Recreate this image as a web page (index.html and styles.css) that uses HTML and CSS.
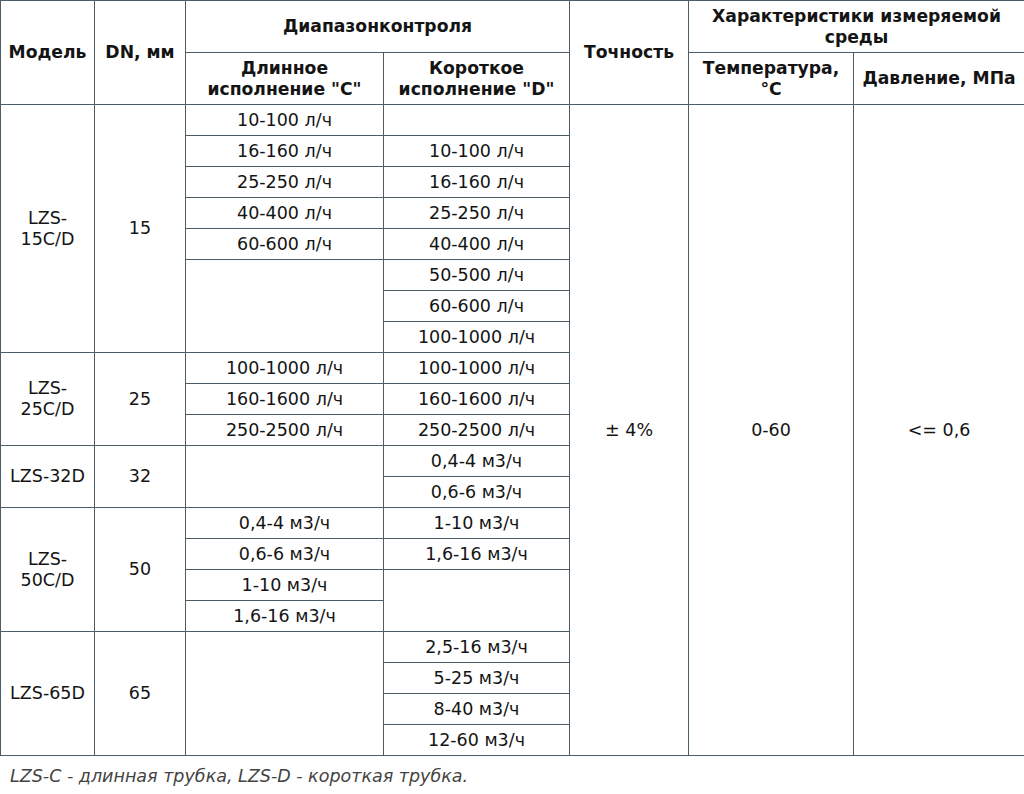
FILE: index.html
```html
<!DOCTYPE html>
<html lang="ru">
<head>
<meta charset="utf-8">
<title>LZS</title>
<link rel="stylesheet" href="styles.css">
</head>
<body>
<table class="spec">
  <colgroup>
    <col class="c-model"><col class="c-dn"><col class="c-long"><col class="c-short"><col class="c-acc"><col class="c-temp"><col class="c-press">
  </colgroup>
  <thead>
    <tr>
      <th rowspan="2">Модель</th>
      <th rowspan="2">DN, мм</th>
      <th colspan="2">Диапазонконтроля</th>
      <th rowspan="2">Точность</th>
      <th colspan="2">Характеристики измеряемой среды</th>
    </tr>
    <tr>
      <th>Длинное исполнение "C"</th>
      <th>Короткое исполнение "D"</th>
      <th>Температура, °C</th>
      <th>Давление, МПа</th>
    </tr>
  </thead>
  <tbody>
    <tr><td rowspan="8">LZS-<br>15C/D</td><td rowspan="8">15</td><td>10-100 л/ч</td><td></td><td rowspan="21">± 4%</td><td rowspan="21">0-60</td><td rowspan="21">&lt;= 0,6</td></tr>
    <tr><td>16-160 л/ч</td><td>10-100 л/ч</td></tr>
    <tr><td>25-250 л/ч</td><td>16-160 л/ч</td></tr>
    <tr><td>40-400 л/ч</td><td>25-250 л/ч</td></tr>
    <tr><td>60-600 л/ч</td><td>40-400 л/ч</td></tr>
    <tr><td rowspan="3"></td><td>50-500 л/ч</td></tr>
    <tr><td>60-600 л/ч</td></tr>
    <tr><td>100-1000 л/ч</td></tr>
    <tr><td rowspan="3">LZS-<br>25C/D</td><td rowspan="3">25</td><td>100-1000 л/ч</td><td>100-1000 л/ч</td></tr>
    <tr><td>160-1600 л/ч</td><td>160-1600 л/ч</td></tr>
    <tr><td>250-2500 л/ч</td><td>250-2500 л/ч</td></tr>
    <tr><td rowspan="2">LZS-32D</td><td rowspan="2">32</td><td rowspan="2"></td><td>0,4-4 м3/ч</td></tr>
    <tr><td>0,6-6 м3/ч</td></tr>
    <tr><td rowspan="4">LZS-<br>50C/D</td><td rowspan="4">50</td><td>0,4-4 м3/ч</td><td>1-10 м3/ч</td></tr>
    <tr><td>0,6-6 м3/ч</td><td>1,6-16 м3/ч</td></tr>
    <tr><td>1-10 м3/ч</td><td rowspan="2"></td></tr>
    <tr><td>1,6-16 м3/ч</td></tr>
    <tr><td rowspan="4">LZS-65D</td><td rowspan="4">65</td><td rowspan="4"></td><td>2,5-16 м3/ч</td></tr>
    <tr><td>5-25 м3/ч</td></tr>
    <tr><td>8-40 м3/ч</td></tr>
    <tr><td>12-60 м3/ч</td></tr>
  </tbody>
</table>
<p class="note">LZS-C - длинная трубка, LZS-D - короткая трубка.</p>
</body>
</html>
```

FILE: styles.css
```css
html, body {
  margin: 0;
  padding: 0;
  background: #ffffff;
}
body {
  font-family: "DejaVu Sans", Verdana, sans-serif;
  font-size: 17.5px;
  color: #141414;
}
.spec {
  width: 1024px;
  border-collapse: collapse;
  table-layout: fixed;
}
.c-model { width: 94px; }
.c-dn { width: 91px; }
.c-long { width: 198px; }
.c-short { width: 186px; }
.c-acc { width: 119px; }
.c-temp { width: 165px; }
.c-press { width: 171px; }
.spec th,
.spec td {
  border: 1px solid #4d5d66;
  padding: 0 4px;
  text-align: center;
  vertical-align: middle;
  line-height: 21px;
}
.spec th {
  font-weight: bold;
  font-size: 17.2px;
}
.spec thead tr {
  height: 52px;
}
.spec tbody tr {
  height: 31px;
}
.note {
  margin: 10px 0 0 10px;
  font-style: italic;
  color: #444444;
  line-height: 21px;
}
```
